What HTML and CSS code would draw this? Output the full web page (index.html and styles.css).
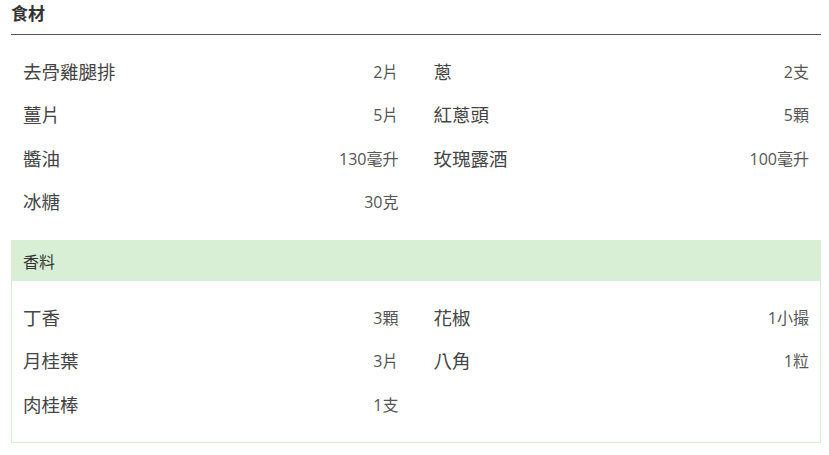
FILE: index.html
```html
<!DOCTYPE html>
<html lang="zh-Hant">
<head>
<meta charset="utf-8">
<link rel="stylesheet" href="styles.css">
</head>
<body>
<div class="page">
  <h2 class="title">食材</h2>
  <div class="list main">
    <div class="row"><span class="name">去骨雞腿排</span><span class="qty">2片</span></div>
    <div class="row"><span class="name">蔥</span><span class="qty">2支</span></div>
    <div class="row"><span class="name">薑片</span><span class="qty">5片</span></div>
    <div class="row"><span class="name">紅蔥頭</span><span class="qty">5顆</span></div>
    <div class="row"><span class="name">醬油</span><span class="qty">130毫升</span></div>
    <div class="row"><span class="name">玫瑰露酒</span><span class="qty">100毫升</span></div>
    <div class="row"><span class="name">冰糖</span><span class="qty">30克</span></div>
  </div>
  <div class="group">
    <div class="group-head">香料</div>
    <div class="list group-body">
      <div class="row"><span class="name">丁香</span><span class="qty">3顆</span></div>
      <div class="row"><span class="name">花椒</span><span class="qty">1小撮</span></div>
      <div class="row"><span class="name">月桂葉</span><span class="qty">3片</span></div>
      <div class="row"><span class="name">八角</span><span class="qty">1粒</span></div>
      <div class="row"><span class="name">肉桂棒</span><span class="qty">1支</span></div>
    </div>
  </div>
</div>
</body>
</html>
```

FILE: styles.css
```css
html, body {
  margin: 0;
  padding: 0;
  background: #fff;
}
body {
  font-family: "Open Sans", "Noto Sans CJK TC", sans-serif;
  color: #444;
}
.page {
  padding: 0 8px 0 11px;
}
.title {
  margin: 0;
  padding-top: 3px;
  height: 31px;
  font-size: 17px;
  line-height: 22px;
  font-weight: 700;
  color: #333;
  border-bottom: 1px solid #555;
}
.list {
  display: grid;
  grid-template-columns: 1fr 1fr;
  column-gap: 35px;
}
.main {
  padding: 14px 12px 17px 12px;
}
.row {
  height: 43.5px;
  display: flex;
  align-items: center;
  justify-content: space-between;
}
.name {
  font-size: 18.5px;
  color: #444;
}
.qty {
  font-size: 16px;
  color: #555;
}
.group {
  border: 1px solid #d8efd6;
}
.group-head {
  background: #d8efd6;
  height: 40px;
  display: flex;
  align-items: center;
  padding-left: 11px;
  font-size: 16px;
  color: #333;
}
.group-body {
  padding: 14px 11px 16px 11px;
}
```
